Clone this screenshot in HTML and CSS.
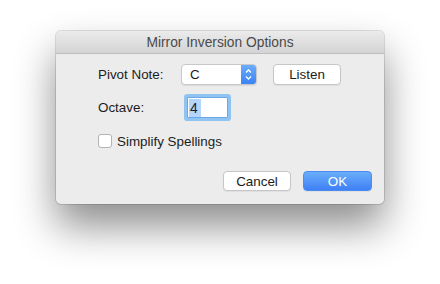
FILE: index.html
```
<!DOCTYPE html>
<html lang="en">
<head>
  <meta charset="UTF-8" />
  <title>Mirror Inversion Options</title>
  <link rel="stylesheet" href="styles.css">
</head>
<body>
  <div class="window">
    <div class="titlebar">Mirror Inversion Options</div>
    <div class="content">
      <div class="row">
        <label class="label">Pivot Note:</label>
        <div class="popup">
          <span class="popup-value">C</span>
          <span class="stepper">
            <svg width="9" height="13" viewBox="0 0 9 13">
              <path d="M2 4.5 L4.5 2 L7 4.5 M2 8.5 L4.5 11 L7 8.5" fill="none" stroke="#fff" stroke-width="1.3"/>
            </svg>
          </span>
        </div>
        <button class="btn listen">Listen</button>
      </div>
      <div class="row octave-row">
        <label class="label">Octave:</label>
        <div class="field"><span class="selected">4</span></div>
      </div>
      <div class="row check-row">
        <span class="checkbox"></span>
        <label>Simplify Spellings</label>
      </div>
      <div class="buttons">
        <button class="btn">Cancel</button>
        <button class="btn primary">OK</button>
      </div>
    </div>
  </div>
</body>
</html>
```
FILE: styles.css
```
html, body {
  height: 100%;
}
body {
  margin: 0;
  padding-top: 31px;
  box-sizing: border-box;
  min-height: 284px;
  background: #fff;
  font-family: 'Liberation Sans', Arial, sans-serif;
  font-size: 13.4px;
  color: #1c1c1c;
}
.window {
  margin-left: 56px;
  width: 328px;
  height: 173px;
  border-radius: 5px;
  background: #ececec;
  overflow: hidden;
  box-shadow: 0 0 0 1px rgba(0,0,0,0.12), 0 22px 40px rgba(0,0,0,0.45);
}
.titlebar {
  height: 22px;
  line-height: 23px;
  text-align: center;
  font-size: 13.8px;
  color: #4a4a4a;
  background: linear-gradient(#ebebeb, #d4d4d4);
  border-bottom: 1px solid #bdbdbd;
}
.content {
  padding: 10px 12px 0 42px;
}
.row {
  display: flex;
  align-items: center;
  height: 21px;
}
.label {
  width: 83px;
}
.popup {
  width: 76px;
  height: 21px;
  box-sizing: border-box;
  display: flex;
  background: #fff;
  border: 1px solid #c9c9c9;
  border-radius: 4px;
  box-shadow: 0 1px 1px rgba(0,0,0,0.08);
  overflow: hidden;
}
.popup-value {
  flex: 1;
  padding-left: 8px;
  line-height: 19px;
}
.stepper {
  width: 15px;
  display: flex;
  align-items: center;
  justify-content: center;
  background: linear-gradient(#6aacfa, #3c82f4);
}
.btn {
  font-family: inherit;
  font-size: 13.4px;
  color: #1c1c1c;
  background: #fff;
  border: 1px solid #c6c6c6;
  border-radius: 4px;
  box-shadow: 0 1px 1px rgba(0,0,0,0.06);
  width: 68px;
  height: 21px;
  padding: 0;
}
.listen {
  margin-left: 16px;
}
.octave-row {
  margin-top: 12px;
}
.field {
  margin-left: 6px;
  width: 41px;
  height: 21px;
  box-sizing: border-box;
  background: #fff;
  border: 1px solid #6ea8e4;
  box-shadow: 0 0 0 3px #8fc3f1;
  border-radius: 1px;
  padding: 1px 0 0 1px;
}
.selected {
  display: inline-block;
  background: #b4d6fd;
  padding: 0 3px 0 1px;
  line-height: 18px;
  font-size: 14px;
}
.check-row {
  margin-top: 16px;
  height: 14px;
}
.checkbox {
  width: 14px;
  height: 14px;
  box-sizing: border-box;
  background: #fff;
  border: 1px solid #b3b3b3;
  border-radius: 3px;
  margin-right: 5px;
}
.buttons {
  display: flex;
  justify-content: flex-end;
  gap: 12px;
  margin-top: 23px;
}
.buttons .btn {
  height: 20px;
}
.primary {
  width: 69px;
  color: #fff;
  border: 1px solid #4b8cf2;
  background: linear-gradient(#69aefa, #3f80f5);
}
```
